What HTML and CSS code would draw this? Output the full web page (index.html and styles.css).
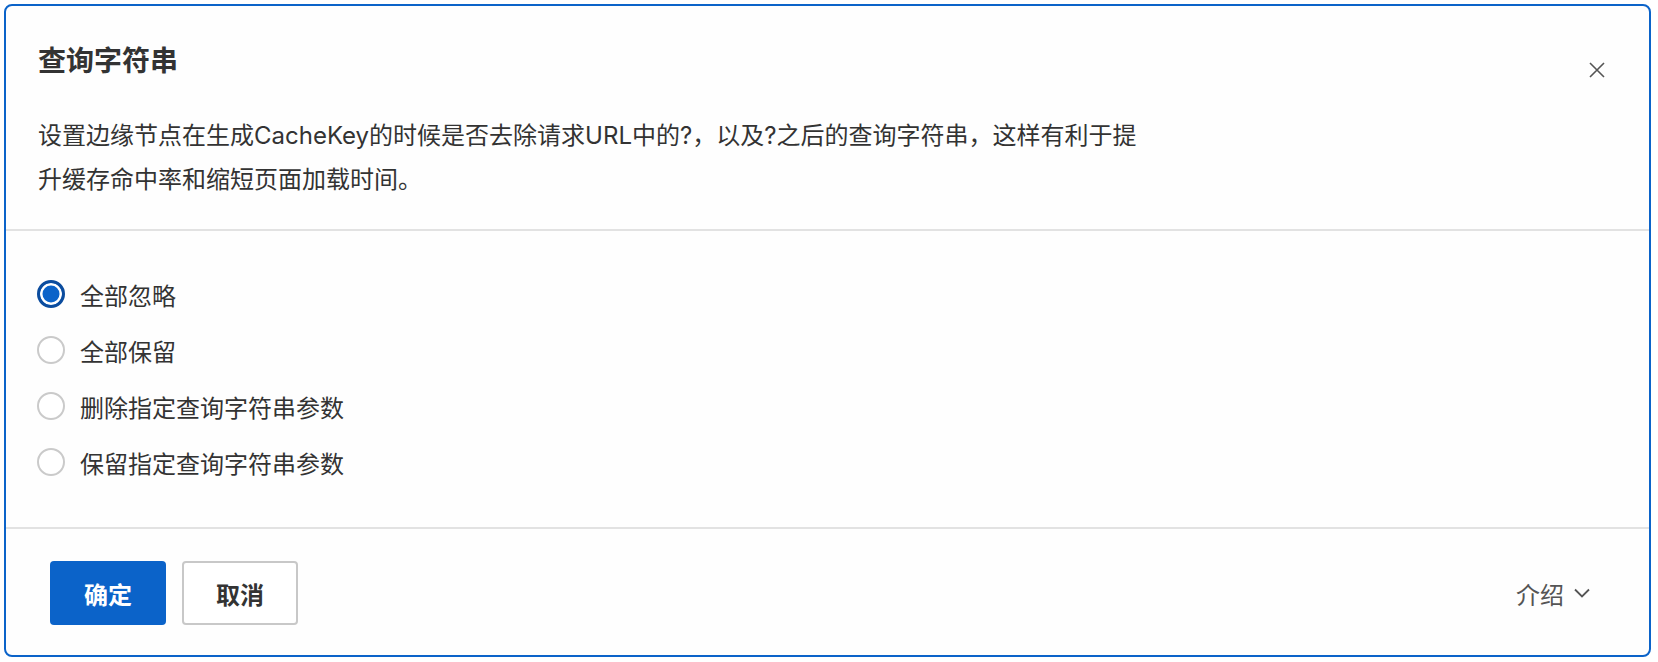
FILE: index.html
```html
<!DOCTYPE html>
<html lang="zh-CN">
<head>
<meta charset="utf-8">
<title>查询字符串</title>
<link rel="stylesheet" href="styles.css">
</head>
<body>
<div class="dialog">
  <header class="dialog-header">
    <div class="head-row">
      <h2 class="title">查询字符串</h2>
      <button class="close" aria-label="关闭">
        <svg width="16" height="16" viewBox="0 0 16 16"><path d="M1 1L15 15M15 1L1 15" stroke="#555" stroke-width="1.6" fill="none"/></svg>
      </button>
    </div>
    <p class="desc">设置边缘节点在生成CacheKey的时候是否去除请求URL中的?，以及?之后的查询字符串，这样有利于提升缓存命中率和缩短页面加载时间。</p>
  </header>
  <section class="dialog-body">
    <label class="option"><input type="radio" name="qs" checked><span>全部忽略</span></label>
    <label class="option"><input type="radio" name="qs"><span>全部保留</span></label>
    <label class="option"><input type="radio" name="qs"><span>删除指定查询字符串参数</span></label>
    <label class="option"><input type="radio" name="qs"><span>保留指定查询字符串参数</span></label>
  </section>
  <footer class="dialog-footer">
    <div class="actions">
      <button class="btn btn-primary">确定</button>
      <button class="btn btn-default">取消</button>
    </div>
    <button class="intro">介绍
      <svg width="16" height="10" viewBox="0 0 16 10"><path d="M1 1.5L8 8.5L15 1.5" stroke="#555" stroke-width="1.8" fill="none"/></svg>
    </button>
  </footer>
</div>
</body>
</html>
```
FILE: styles.css
```css
* { box-sizing: border-box; }
html, body { margin: 0; padding: 0; background: #ffffff; }
body {
  padding: 4px;
  font-family: "Inter", "Noto Sans CJK SC", sans-serif;
  color: #333333;
}
.dialog {
  width: 1647px;
  height: 653px;
  border: 2px solid #0b63c9;
  border-radius: 8px;
  background: #fefefe;
  display: flex;
  flex-direction: column;
}
.dialog-header {
  padding: 36px 44px 27px 32px;
  border-bottom: 2px solid #e2e2e2;
}
.head-row {
  display: flex;
  justify-content: space-between;
  align-items: flex-start;
}
.title {
  margin: 0;
  font-size: 28px;
  line-height: 38px;
  font-weight: 700;
  color: #333333;
}
.close {
  margin: 20px 0 0;
  padding: 0;
  border: 0;
  background: none;
  width: 16px;
  height: 16px;
  display: block;
}
.close svg { display: block; }
.desc {
  margin: 34px 0 0;
  max-width: 1115px;
  font-size: 24px;
  line-height: 44px;
  color: #333333;
}
.dialog-body {
  padding: 35px 31px 37px;
  border-bottom: 2px solid #e2e2e2;
  display: flex;
  flex-direction: column;
}
.option {
  height: 56px;
  display: flex;
  align-items: center;
  gap: 15px;
  font-size: 24px;
  color: #333333;
}
.option input {
  appearance: none;
  -webkit-appearance: none;
  margin: 0;
  width: 28px;
  height: 28px;
  border-radius: 50%;
  border: 2px solid #cacaca;
  background: #ffffff;
  flex: none;
}
.option input:checked {
  border: 3px solid #0b4c9e;
  background: #0b63c9;
  box-shadow: inset 0 0 0 2.5px #ffffff;
}
.dialog-footer {
  flex: 1;
  padding: 32px 59px 30px 44px;
  display: flex;
  justify-content: space-between;
  align-items: center;
}
.actions {
  display: flex;
  gap: 16px;
}
.btn {
  width: 116px;
  height: 64px;
  border-radius: 4px;
  font-family: inherit;
  font-size: 24px;
  font-weight: 700;
  padding: 0;
}
.btn-primary {
  background: #0b63c9;
  border: 0;
  color: #ffffff;
}
.btn-default {
  background: #ffffff;
  border: 2px solid #c8c8c8;
  color: #333333;
}
.intro {
  border: 0;
  background: none;
  padding: 0;
  font-family: inherit;
  font-size: 24px;
  color: #555555;
  display: flex;
  align-items: center;
  gap: 10px;
}
.intro svg { display: block; }
```
